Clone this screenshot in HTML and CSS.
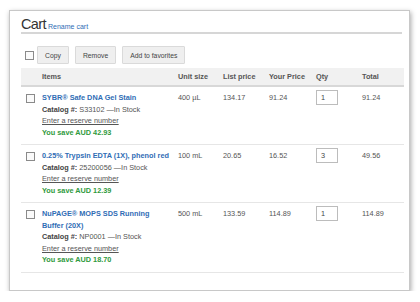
FILE: index.html
```html
<!DOCTYPE html>
<html lang="en">
<head>
    <meta charset="UTF-8">
    <title>Cart</title>
    <link rel="stylesheet" href="styles.css">
</head>
<body>
    <div class="cart-card">
        <div class="cart-head">
            <h1 class="cart-title">Cart</h1>
            <a href="#" class="rename-link">Rename cart</a>
        </div>

        <div class="cart-actions">
            <span class="check"></span>
            <button class="action-btn">Copy</button>
            <button class="action-btn">Remove</button>
            <button class="action-btn">Add to favorites</button>
        </div>

        <table class="cart-table">
            <thead>
                <tr>
                    <th class="col-check"></th>
                    <th class="col-item">Items</th>
                    <th class="col-size">Unit size</th>
                    <th class="col-list">List price</th>
                    <th class="col-your">Your Price</th>
                    <th class="col-qty">Qty</th>
                    <th class="col-total">Total</th>
                </tr>
            </thead>
            <tbody>
                <tr>
                    <td><span class="check"></span></td>
                    <td class="item-cell">
                        <a href="#" class="item-name">SYBR® Safe DNA Gel Stain</a>
                        <div class="item-line"><b>Catalog #:</b> S33102 —In Stock</div>
                        <div class="item-line"><a href="#" class="reserve">Enter a reserve number</a></div>
                        <div class="saving">You save AUD 42.93</div>
                    </td>
                    <td>400 µL</td>
                    <td>134.17</td>
                    <td>91.24</td>
                    <td><input class="qty" type="text" value="1"></td>
                    <td>91.24</td>
                </tr>
                <tr>
                    <td><span class="check"></span></td>
                    <td class="item-cell">
                        <a href="#" class="item-name">0.25% Trypsin EDTA (1X), phenol red</a>
                        <div class="item-line"><b>Catalog #:</b> 25200056 —In Stock</div>
                        <div class="item-line"><a href="#" class="reserve">Enter a reserve number</a></div>
                        <div class="saving">You save AUD 12.39</div>
                    </td>
                    <td>100 mL</td>
                    <td>20.65</td>
                    <td>16.52</td>
                    <td><input class="qty" type="text" value="3"></td>
                    <td>49.56</td>
                </tr>
                <tr>
                    <td><span class="check"></span></td>
                    <td class="item-cell">
                        <a href="#" class="item-name">NuPAGE® MOPS SDS Running Buffer (20X)</a>
                        <div class="item-line"><b>Catalog #:</b> NP0001 —In Stock</div>
                        <div class="item-line"><a href="#" class="reserve">Enter a reserve number</a></div>
                        <div class="saving">You save AUD 18.70</div>
                    </td>
                    <td>500 mL</td>
                    <td>133.59</td>
                    <td>114.89</td>
                    <td><input class="qty" type="text" value="1"></td>
                    <td>114.89</td>
                </tr>
            </tbody>
        </table>
    </div>
</body>
</html>
```

FILE: styles.css
```css
body {
    margin: 0;
    background: #fff;
    font-family: "Liberation Sans", Arial, sans-serif;
    color: #444;
}

.cart-card {
    margin: 10px 0 0 9px;
    width: 401px;
    height: 281px;
    box-sizing: border-box;
    padding: 0 7px 0 11px;
    background: #fff;
    border: 1px solid #c8c8c8;
    box-shadow: 1px 2px 5px rgba(0, 0, 0, 0.35);
}

.cart-head {
    display: flex;
    align-items: baseline;
    gap: 2px;
    padding-top: 5px;
    height: 16px;
    border-bottom: 2px solid #d6d6d6;
}

.cart-title {
    margin: 0;
    font-size: 14.5px;
    font-weight: normal;
    letter-spacing: -0.6px;
    color: #333;
    line-height: 16px;
}

.rename-link {
    font-size: 7px;
    color: #2f6db5;
    text-decoration: none;
}

.cart-actions {
    display: flex;
    align-items: center;
    gap: 6px;
    margin-top: 12px;
    padding-left: 4px;
}

.check {
    display: inline-block;
    width: 7px;
    height: 7px;
    border: 1px solid #8a8a8a;
    background: #fafafa;
}

.cart-actions .check {
    margin-right: -3px;
}

.action-btn {
    height: 18px;
    padding: 0 7px;
    font-family: inherit;
    font-size: 6.8px;
    color: #444;
    background: #efefef;
    border: 1px solid #dadada;
    border-radius: 1px;
}

.cart-table {
    width: 383px;
    margin-top: 4px;
    border-collapse: collapse;
    font-size: 7.3px;
    table-layout: fixed;
}

.cart-table th {
    height: 17px;
    padding: 0;
    text-align: left;
    font-weight: bold;
    color: #555;
    background: #f1f1f1;
    border-bottom: 2px solid #d8d8d8;
}

.col-check { width: 21px; }
.col-item { width: 136px; }
.col-size { width: 45px; }
.col-list { width: 46px; }
.col-your { width: 47px; }
.col-qty { width: 46px; }

.cart-table td {
    padding: 5px 0 6px;
    vertical-align: top;
    line-height: 11.5px;
    border-bottom: 1px solid #e6e6e6;
    color: #555;
}

.cart-table td:first-child {
    padding-left: 5px;
    padding-top: 7px;
}

.cart-table td.item-cell {
    padding-right: 9px;
}

.item-name {
    font-weight: bold;
    color: #2f6db5;
    text-decoration: none;
}

.item-line b {
    color: #444;
}

.reserve {
    color: #555;
}

.saving {
    font-weight: bold;
    color: #2f9a3c;
}

.qty {
    width: 22px;
    height: 15px;
    box-sizing: border-box;
    margin-top: -3px;
    padding: 0 4px;
    font-family: inherit;
    font-size: 7.3px;
    color: #444;
    border: 1px solid #bcbcbc;
}
```
